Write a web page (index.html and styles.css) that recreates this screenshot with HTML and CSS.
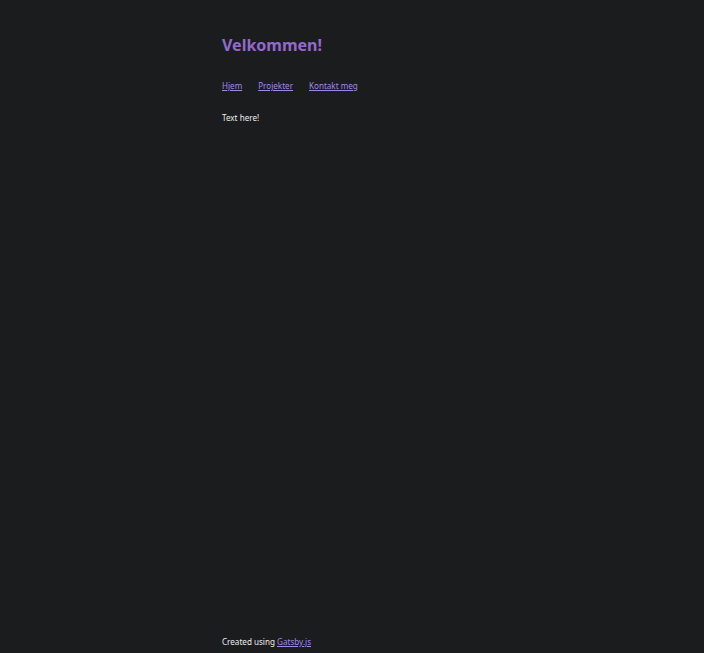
FILE: index.html
```html
<!DOCTYPE html>
<html lang="no">
<head>
<meta charset="utf-8">
<title>Velkommen!</title>
<link rel="stylesheet" href="styles.css">
</head>
<body>
<div class="page">
  <header class="header">
    <h1 class="title">Velkommen!</h1>
    <nav class="nav">
      <a href="#">Hjem</a>
      <a href="#">Projekter</a>
      <a href="#">Kontakt meg</a>
    </nav>
  </header>
  <main class="main">
    <p>Text here!</p>
  </main>
  <footer class="footer">Created using <a href="#">Gatsby.js</a></footer>
</div>
</body>
</html>
```
FILE: styles.css
```css
html, body {
  margin: 0;
  padding: 0;
  height: 100%;
  background: #1b1c1e;
}
body {
  font-family: "Noto Sans", "Open Sans", sans-serif;
  font-size: 8.1px;
  line-height: 11px;
  color: #ececec;
}
.page {
  min-height: 100%;
  box-sizing: border-box;
  width: 260px;
  margin: 0 auto;
  display: flex;
  flex-direction: column;
  padding-top: 34px;
}
.title {
  margin: 0;
  font-size: 16px;
  font-weight: 700;
  color: #9469cc;
  line-height: 22px;
}
.nav {
  margin-top: 24px;
  display: flex;
  gap: 16px;
}
a {
  color: #a08ae0;
}
.main {
  flex: 1;
}
.main p {
  margin: 21px 0 0;
}
.footer {
  padding-bottom: 6px;
}
```
